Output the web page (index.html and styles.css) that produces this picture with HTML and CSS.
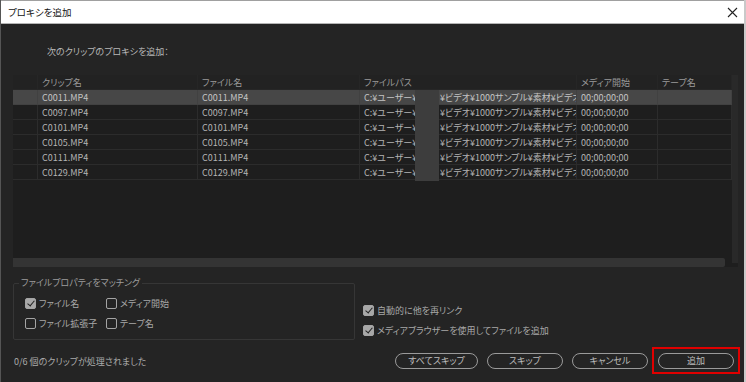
FILE: index.html
```html
<!DOCTYPE html>
<html lang="ja">

<head>
  <meta charset="UTF-8">
  <meta name="viewport" content="width=device-width, initial-scale=1.0">
  <title>プロキシを追加</title>
  <link rel="stylesheet" href="styles.css">
</head>

<body>

  <div class="window">
    <div class="titlebar">
      <span class="title">プロキシを追加</span>
      <svg class="close" width="11" height="11" viewBox="0 0 11 11">
        <path d="M1 1 L10 10 M10 1 L1 10" stroke="#222" stroke-width="1.1" fill="none" />
      </svg>
    </div>

    <div class="content">
      <div class="prompt">次のクリップのプロキシを追加：</div>

      <div class="list">
        <div class="grid">
          <div class="row head">
            <div class="cell"></div>
            <div class="cell">クリップ名</div>
            <div class="cell">ファイル名</div>
            <div class="cell">ファイルパス</div>
            <div class="cell">メディア開始</div>
            <div class="cell">テープ名</div>
          </div>
          <div class="row selected">
            <div class="cell"></div>
            <div class="cell">C0011.MP4</div>
            <div class="cell">C0011.MP4</div>
            <div class="cell path"><span class="pre">C:¥ユーザー¥</span><span class="uname">user</span><span class="rest">¥ビデオ¥1000サンプル¥素材¥ビデオ¥C0011.MP4</span></div>
            <div class="cell">00;00;00;00</div>
            <div class="cell"></div>
          </div>
          <div class="row">
            <div class="cell"></div>
            <div class="cell">C0097.MP4</div>
            <div class="cell">C0097.MP4</div>
            <div class="cell path"><span class="pre">C:¥ユーザー¥</span><span class="uname">user</span><span class="rest">¥ビデオ¥1000サンプル¥素材¥ビデオ¥C0097.MP4</span></div>
            <div class="cell">00;00;00;00</div>
            <div class="cell"></div>
          </div>
          <div class="row">
            <div class="cell"></div>
            <div class="cell">C0101.MP4</div>
            <div class="cell">C0101.MP4</div>
            <div class="cell path"><span class="pre">C:¥ユーザー¥</span><span class="uname">user</span><span class="rest">¥ビデオ¥1000サンプル¥素材¥ビデオ¥C0101.MP4</span></div>
            <div class="cell">00;00;00;00</div>
            <div class="cell"></div>
          </div>
          <div class="row">
            <div class="cell"></div>
            <div class="cell">C0105.MP4</div>
            <div class="cell">C0105.MP4</div>
            <div class="cell path"><span class="pre">C:¥ユーザー¥</span><span class="uname">user</span><span class="rest">¥ビデオ¥1000サンプル¥素材¥ビデオ¥C0105.MP4</span></div>
            <div class="cell">00;00;00;00</div>
            <div class="cell"></div>
          </div>
          <div class="row">
            <div class="cell"></div>
            <div class="cell">C0111.MP4</div>
            <div class="cell">C0111.MP4</div>
            <div class="cell path"><span class="pre">C:¥ユーザー¥</span><span class="uname">user</span><span class="rest">¥ビデオ¥1000サンプル¥素材¥ビデオ¥C0111.MP4</span></div>
            <div class="cell">00;00;00;00</div>
            <div class="cell"></div>
          </div>
          <div class="row">
            <div class="cell"></div>
            <div class="cell">C0129.MP4</div>
            <div class="cell">C0129.MP4</div>
            <div class="cell path"><span class="pre">C:¥ユーザー¥</span><span class="uname">user</span><span class="rest">¥ビデオ¥1000サンプル¥素材¥ビデオ¥C0129.MP4</span></div>
            <div class="cell">00;00;00;00</div>
            <div class="cell"></div>
          </div>
          <!-- user name is blanked out -->
          <div class="redact"></div>
        </div>
        <div class="vscroll"></div>
        <div class="hscroll"></div>
      </div>

      <div class="options">
        <fieldset class="match">
          <legend>ファイルプロパティをマッチング</legend>
          <div class="checks">
            <label class="check"><span class="box on"></span>ファイル名</label>
            <label class="check"><span class="box"></span>メディア開始</label>
            <label class="check"><span class="box"></span>ファイル拡張子</label>
            <label class="check"><span class="box"></span>テープ名</label>
          </div>
        </fieldset>
        <div class="side">
          <label class="check"><span class="box on"></span>自動的に他を再リンク</label>
          <label class="check"><span class="box on"></span>メディアブラウザーを使用してファイルを追加</label>
        </div>
      </div>

      <div class="footer">
        <div class="status">0/6 個のクリップが処理されました</div>
        <div class="buttons">
          <button class="btn">すべてスキップ</button>
          <button class="btn">スキップ</button>
          <button class="btn">キャンセル</button>
          <div class="focus"><button class="btn">追加</button></div>
        </div>
      </div>
    </div>
  </div>

</body>

</html>
```

FILE: styles.css
```css
* {
  box-sizing: border-box;
}

body {
  margin: 0;
  background-color: #242424;
  font-family: "Noto Sans CJK JP", "Noto Sans", sans-serif;
  font-size: 9px;
  font-feature-settings: "palt";
  color: #bdbdbd;
}

.window {
  width: 746px;
  height: 382px;
  border-left: 1px solid #555;
  border-right: 2px solid #c9c9c9;
  overflow: hidden;
}

.titlebar {
  height: 24px;
  background-color: #fff;
  border-top: 1px solid #a0a0a0;
  border-bottom: 1px solid #b5b5b5;
  display: flex;
  align-items: center;
  justify-content: space-between;
  padding: 0 6px 0 7px;
  color: #111;
  font-size: 9.5px;
}

.content {
  padding: 21px 0 0 12px;
}

.prompt {
  height: 14px;
  line-height: 14px;
  padding-left: 34px;
  color: #b8b8b8;
}

/* clip list */
.list {
  margin-top: 16px;
  width: 725px;
  height: 192px;
  background-color: #1e1e1e;
  position: relative;
  display: flex;
  flex-direction: column;
}

.grid {
  position: relative;
  width: 719px;
  flex: 1;
}

.row {
  display: grid;
  grid-template-columns: 25px 160px 162px 217px 81px 74px;
  height: 15px;
}

.cell {
  border-right: 1px solid #2c2c2c;
  border-bottom: 1px solid #2c2c2c;
  padding-left: 4px;
  line-height: 16px;
  white-space: nowrap;
  overflow: hidden;
  color: #b4b4b4;
}

.path {
  display: flex;
}

.path span {
  flex: none;
}

.path .pre {
  width: 52px;
}

.path .uname {
  width: 24px;
  overflow: hidden;
  color: transparent;
}

.path .rest {
  flex: 1;
  min-width: 0;
  overflow: hidden;
}

.row.head {
  background-color: #222;
}

.row.head .cell {
  color: #9a9a9a;
  border-color: #262626;
}

.row.selected .cell {
  background-color: #474747;
  border-color: #414141;
  color: #c4c4c4;
}

.redact {
  position: absolute;
  left: 402px;
  top: 15px;
  width: 24px;
  height: 91px;
  background-color: #3d3d3d;
}

.vscroll {
  position: absolute;
  right: 0;
  top: 0;
  bottom: 4px;
  width: 6px;
  background-color: #292929;
}

.hscroll {
  height: 9px;
  width: 712px;
  background-color: #343434;
  border-radius: 0 2px 2px 0;
}

/* options */
.options {
  display: flex;
  margin-top: 10px;
}

.match {
  margin: 0;
  width: 342px;
  height: 63px;
  border: 1px solid #363636;
  border-radius: 2px;
  padding: 0 0 0 11px;
}

.match legend {
  padding: 0 2px;
  margin-left: -6px;
  color: #9c9c9c;
  line-height: 12px;
}

.checks {
  display: grid;
  grid-template-columns: 81px auto;
  row-gap: 6px;
  margin-top: 7px;
}

.check {
  display: flex;
  align-items: center;
  gap: 3px;
  height: 14px;
  color: #a8a8a8;
}

.box {
  width: 11px;
  height: 11px;
  border: 1.5px solid #a4a4a4;
  border-radius: 2px;
  position: relative;
}

.box.on {
  background-color: #a8a8a8;
}

.box.on::after {
  content: "";
  position: absolute;
  left: 2.5px;
  top: 0;
  width: 3px;
  height: 6px;
  border: solid #222;
  border-width: 0 1.5px 1.5px 0;
  transform: rotate(40deg);
}

.side {
  display: flex;
  flex-direction: column;
  gap: 6px;
  margin: 26px 0 0 8px;
}

/* footer */
.footer {
  display: flex;
  align-items: center;
  justify-content: space-between;
  margin-top: 7px;
  width: 727px;
}

.status {
  color: #aaa;
  padding: 2px 0 0 1px;
}

.buttons {
  display: flex;
  align-items: center;
  gap: 9px;
}

.btn {
  width: 83px;
  height: 16px;
  padding: 0;
  border: 1px solid #9a9a9a;
  border-radius: 8px;
  background: transparent;
  font-family: inherit;
  font-size: 9px;
  font-feature-settings: "palt";
  color: #bcbcbc;
  line-height: 14px;
}

.buttons .btn:nth-child(2),
.buttons .btn:nth-child(3) {
  width: 76px;
}

.focus {
  border: 2px solid #e00000;
  padding: 4px 4px 3px 4px;
  margin-left: -5px;
}

.focus .btn {
  width: 76px;
}
```
